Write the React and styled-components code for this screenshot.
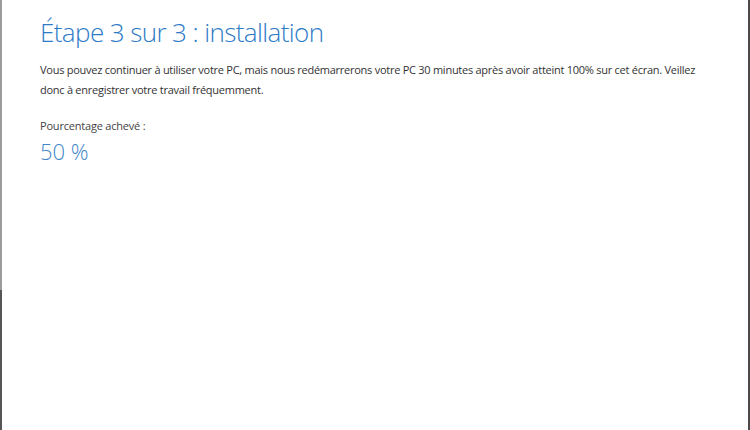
import React from 'react';
import styled, { createGlobalStyle } from 'styled-components';

const Global = createGlobalStyle`
  html, body { margin: 0; padding: 0; background: #fff; }
  body { font-family: "Open Sans", "Noto Sans", sans-serif; }
`

const Frame = styled.div`
  box-sizing: border-box;
  width: 750px;
  height: 430px;
  display: flex;
  background: #fff;
`

const LeftEdge = styled.div`
  width: 2px;
  display: flex;
  flex-direction: column;
  span:first-child { height: 290px; background: #9c9c9c; }
  span:last-child { flex: 1; background: #555; }
`

const Content = styled.main`
  flex: 1;
  padding: 14px 38px 0 38px;
  color: #333;
`

const RightEdge = styled.div`
  width: 2px;
  background: #4a4a4a;
`

const Title = styled.h1`
  margin: 0;
  font-weight: 300;
  font-size: 26px;
  line-height: 36px;
  color: #2e7bc6;
  letter-spacing: -0.6px;
`

const Text = styled.p`
  margin: 10px 0 0;
  font-size: 11px;
  line-height: 20px;
  color: #333;
  letter-spacing: ${p => p.$tight ? '-0.26px' : '0'};
`

const Label = styled.div`
  margin-top: 18px;
  font-size: 11px;
  line-height: 16px;
  color: #444;
  letter-spacing: -0.2px;
`

const Percent = styled.div`
  margin-top: 3px;
  font-size: 22px;
  font-weight: 300;
  line-height: 28px;
  color: #3f86c9;
`

export default function App() {
  return (
    <>
      <Global />
      <Frame>
        <LeftEdge><span /><span /></LeftEdge>
        <Content>
          <Title>Étape 3 sur 3 : installation</Title>
          <Text $tight>
            Vous pouvez continuer à utiliser votre PC, mais nous redémarrerons votre PC 30 minutes après avoir atteint 100% sur cet écran. Veillez donc à enregistrer votre travail fréquemment.
          </Text>
          <Label>Pourcentage achevé :</Label>
          <Percent>50 %</Percent>
        </Content>
        <RightEdge />
      </Frame>
    </>
  );
}
